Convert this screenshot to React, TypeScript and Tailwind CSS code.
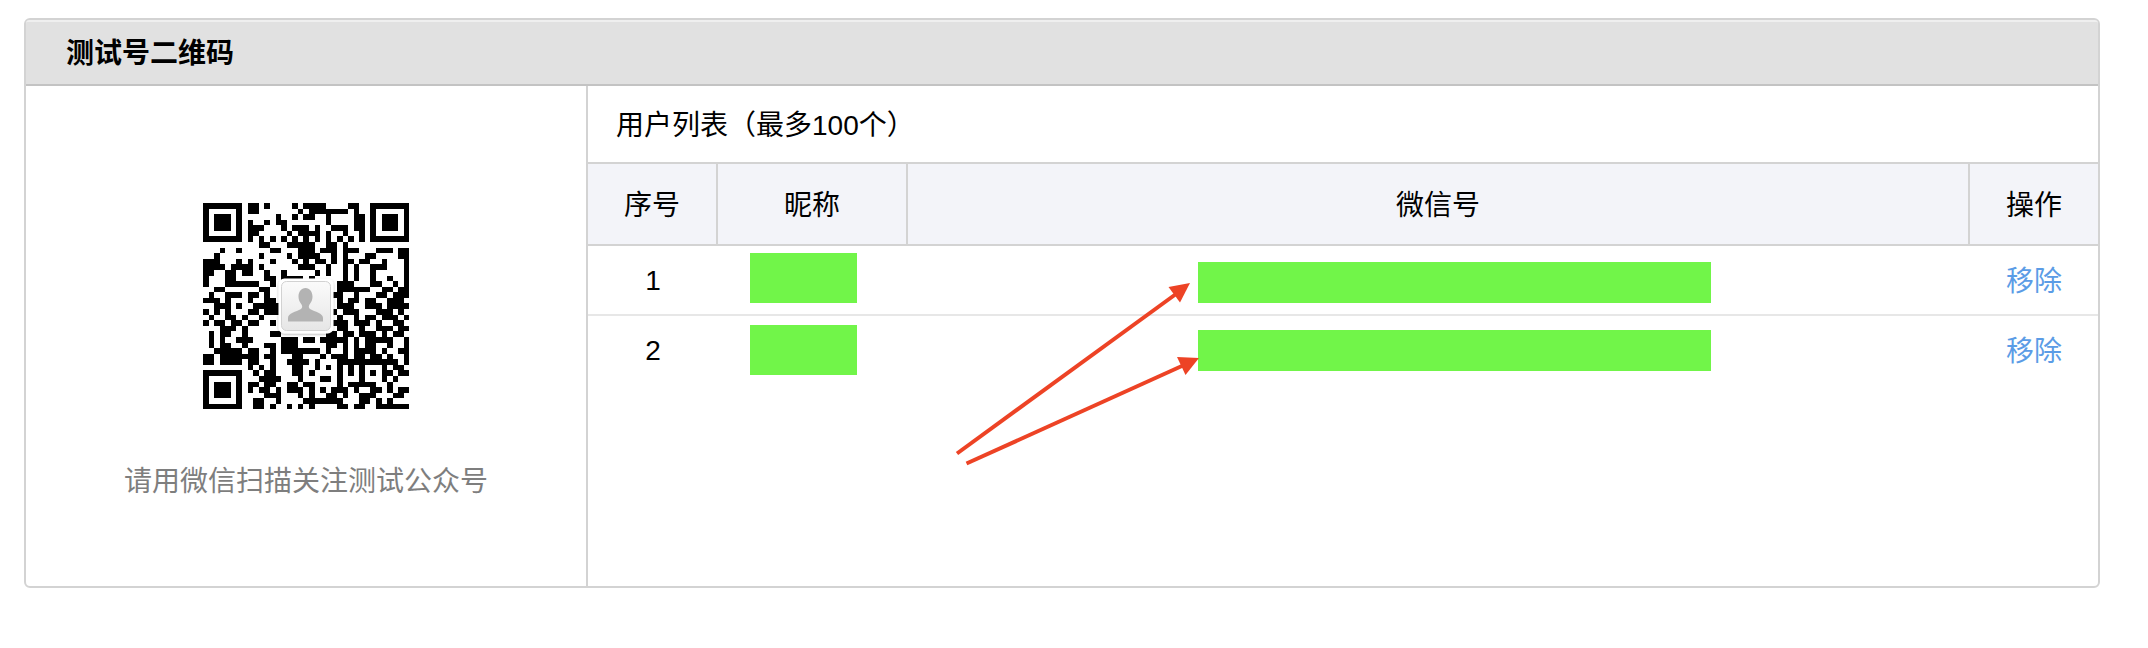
import React from 'react';

const QR_ROWS = [
  '1111111011010000101111000011001111111',
  '1000001011000000010111111101001000001',
  '1011101000000100101100100001101011101',
  '1011101010010110000000100001101011101',
  '1011101011100010111010011101101011101',
  '1000001011000001011110100100101000001',
  '1111111010101010101010101010101111111',
  '0000000000110001111100110100000000000',
  '0001001000001100011101110111000111011',
  '0010000000100001011110010100011000011',
  '1110001010001000101011010110110010001',
  '1111011110100000011100100101001110001',
  '1100110110010010000010100101001000001',
  '1000110000011011110100000101001001001',
  '1000111111001000000000001110001100101',
  '0011000000110000000000001111110011011',
  '0100111011010000000000011001000110111',
  '1110100010011000000000001011011001110',
  '0011101001111100000000001110011101111',
  '1010100011011100000000010111000111010',
  '0100110100100000000000001001011011101',
  '1011011011001000000000011101110100110',
  '0001110100000000000000001100100111011',
  '0101100100001100000000110110111010110',
  '0101001110000011101101111101011111001',
  '0101100100011011100000110101011001001',
  '0011111011001011111110100101111010011',
  '1101111111011000110001011101101101001',
  '1101111011001001111010001111111111101',
  '0000000010101000110010101010100010110',
  '1111111001011000110100001010101011011',
  '1000001000111100010001101000100010100',
  '1011101011011001101100001011111001000',
  '1011101010110101110101011101001101011',
  '1011101000011100010100110100111000110',
  '1000001001100100001111111000110101000',
  '1111111001101001010100001101100111111',
];

const QR_PATH = QR_ROWS.map((row, y) =>
  Array.from(row.matchAll(/1+/g), (run) => `M${run.index} ${y}h${run[0].length}v1h-${run[0].length}z`).join(''),
).join('');

function QrCode() {
  return (
    <svg className="block h-[207px] w-[207px]" viewBox="0 0 207 207" role="img">
      <defs>
        <linearGradient id="avatar" x1="0" y1="0" x2="0" y2="1">
          <stop offset="0" stopColor="#fbfbfb" />
          <stop offset="1" stopColor="#e6e6e6" />
        </linearGradient>
        <filter id="lift" x="-20%" y="-20%" width="140%" height="140%">
          <feDropShadow dx="0" dy="1" stdDeviation="1" floodColor="#000" floodOpacity="0.3" />
        </filter>
      </defs>
      <path d={QR_PATH} transform="scale(5.58)" fill="#000" shapeRendering="crispEdges" />
      <rect x="75.5" y="75.5" width="55" height="55" rx="6" fill="#fff" filter="url(#lift)" />
      <rect x="78.5" y="78.5" width="49" height="49" rx="5" fill="url(#avatar)" stroke="#d2d2d2" />
      <path
        d="M85 118.500v-3.500c0-5 8-6 13-9 1.500-1 1.500-3 .5-4.500-2-2.500-3-5-3-8 0-4.700 2.800-8.500 7-8.500s7 3.800 7 8.500c0 3-1 5.500-3 8-1 1.500-1 3.500.5 4.500 5 3 13 4 13 9v3.500z"
        fill="#b3b3b3"
      />
    </svg>
  );
}

type User = {
  id: number;
  nickCell: string;
  accountCell: string;
};

const users: User[] = [
  { id: 1, nickCell: 'pt-[7px]', accountCell: 'pt-4' },
  { id: 2, nickCell: 'pt-[9px]', accountCell: 'pt-[14px]' },
];

const COLUMNS = 'grid grid-cols-[130px_190px_1fr_128px]';

function UserRow({ user }: { user: User }) {
  return (
    <div className={`${COLUMNS} h-[70px] border-b-2 border-[#e7e7e7] last:border-transparent`}>
      <div className="flex items-center justify-center pt-0.5">{user.id}</div>
      <div className={`pl-8 ${user.nickCell}`}>
        <div className="h-[50px] w-[107px] bg-[#71f549]" />
      </div>
      <div className={`pl-[290px] ${user.accountCell}`}>
        <div className="h-[41px] w-[513px] bg-[#71f549]" />
      </div>
      <a className="flex items-center justify-center pt-1 text-[#5b9ce6]">移除</a>
    </div>
  );
}

function Arrows() {
  return (
    <svg className="pointer-events-none absolute top-[270px] left-[940px] h-[210px] w-[270px]" viewBox="940 270 270 210">
      <g stroke="#ed4325" strokeWidth="4" fill="#ed4325">
        <path d="M957 453.500L1176 294" />
        <path d="M966.500 463.500L1183 365.500" />
        <path d="M1190 283L1168.500 287L1180 302.500Z" stroke="none" />
        <path d="M1199 358L1177 357L1185.500 375Z" stroke="none" />
      </g>
    </svg>
  );
}

export default function App() {
  return (
    <div className="relative h-[648px] w-[2148px] bg-white pt-[18px] pl-6 font-['Liberation_Sans','Noto_Sans_CJK_SC',sans-serif] text-[28px] leading-10 text-black">
      <section className="flex h-[570px] w-[2076px] flex-col overflow-hidden rounded-[6px] border-2 border-[#d3d3d3]">
        <header className="flex h-[66px] shrink-0 items-center border-t-2 border-b-2 border-t-[#efefef] border-b-[#c3c3c3] bg-[#e1e1e1] pt-0.5 pl-10 font-bold">
          <h2>测试号二维码</h2>
        </header>
        <div className="flex flex-1">
          <aside className="flex w-[562px] shrink-0 flex-col items-center border-r-2 border-[#d3d3d3] pt-[117px]">
            <QrCode />
            <p className="mt-[52px] text-[#7e7e7e]">请用微信扫描关注测试公众号</p>
          </aside>
          <main className="flex-1">
            <div className="flex h-[78px] items-center border-b-2 border-[#d3d3d3] pt-[3px] pl-7">用户列表（最多100个）</div>
            <div className={`${COLUMNS} h-[82px] grid-rows-[80px] border-b-2 border-[#d3d3d3] bg-[#f3f4f9] text-center leading-[83px]`}>
              <div className="border-r-2 border-[#d3d3d3]">序号</div>
              <div className="border-r-2 border-[#d3d3d3]">昵称</div>
              <div className="border-r-2 border-[#d3d3d3]">微信号</div>
              <div>操作</div>
            </div>
            <div>
              {users.map((user) => (
                <UserRow key={user.id} user={user} />
              ))}
            </div>
          </main>
        </div>
      </section>
      <Arrows />
    </div>
  );
}
